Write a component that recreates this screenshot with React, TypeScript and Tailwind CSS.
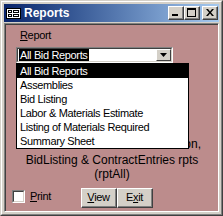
import React from "react";

const sans = { fontFamily: '"Liberation Sans", Arial, sans-serif' };

function TitleBtn({ children, className = "" }: { children: React.ReactNode; className?: string }) {
  return (
    <div className={"w-[16px] h-[14px] bg-[#D4D0C8] border-t border-l border-t-white border-l-white border-r border-b border-r-[#404040] border-b-[#404040] " + className}>
      <div className="w-full h-full border-r border-b border-r-[#808080] border-b-[#808080] flex items-center justify-center">
        {children}
      </div>
    </div>
  );
}

function Btn({ children }: { children: React.ReactNode }) {
  return (
    <div className="w-[36px] h-[20px] bg-[#D4D0C8] border-t border-l border-t-white border-l-white border-r border-b border-r-[#404040] border-b-[#404040]">
      <div className="w-full h-full border-r border-b border-r-[#808080] border-b-[#808080] flex items-center justify-center text-[11px] tracking-[-0.35px] text-black leading-none">
        {children}
      </div>
    </div>
  );
}

const items = [
  "All Bid Reports",
  "Assemblies",
  "Bid Listing",
  "Labor & Materials Estimate",
  "Listing of Materials Required",
  "Summary Sheet",
];

export default function App() {
  return (
    <div style={sans} className="w-[223px] h-[216px] bg-[#D4D0C8] border border-t-[#D4D0C8] border-l-[#D4D0C8] border-r-[#404040] border-b-[#404040]">
      <div className="w-full h-full border border-t-white border-l-white border-r-[#808080] border-b-[#808080] p-[2px] flex flex-col">
        {/* Title bar */}
        <div className="h-[18px] flex items-center bg-gradient-to-r from-[#0A246A] to-[#A6CAF0] pl-[2px] pr-[1px]">
          <svg width="15" height="11" viewBox="0 0 15 11" className="shrink-0">
            <rect x="0.5" y="0.5" width="14" height="10" fill="#fff" stroke="#000" />
            <rect x="2.5" y="2.5" width="3" height="2" fill="#fff" stroke="#000" />
            <rect x="7.5" y="2.5" width="5" height="2" fill="#fff" stroke="#000" />
            <rect x="2.5" y="6.5" width="3" height="2" fill="#fff" stroke="#000" />
            <rect x="7.5" y="6.5" width="5" height="2" fill="#fff" stroke="#000" />
          </svg>
          <span className="ml-[3px] text-white font-bold text-[12px] leading-none">Reports</span>
          <div className="ml-auto flex items-center">
            <TitleBtn>
              <svg width="8" height="7" viewBox="0 0 8 7"><rect x="0" y="5" width="6" height="2" fill="#000" /></svg>
            </TitleBtn>
            <TitleBtn>
              <svg width="9" height="9" viewBox="0 0 9 9"><rect x="0.5" y="0.5" width="8" height="8" fill="none" stroke="#000" /><rect x="0" y="0" width="9" height="2" fill="#000" /></svg>
            </TitleBtn>
            <TitleBtn className="ml-[2px]">
              <svg width="8" height="7" viewBox="0 0 8 7">
                <path d="M0 0h2l2 2.5L6 0h2L5 3.5 8 7H6L4 4.5 2 7H0l3-3.5z" fill="#000" />
              </svg>
            </TitleBtn>
          </div>
        </div>
        {/* Client */}
        <div className="mt-[1px] flex-1 border-t border-l border-t-[#808080] border-l-[#808080] border-r border-b border-r-white border-b-white">
          <div className="relative w-full h-full bg-[#BC8C8C] border-t border-l border-t-[#404040] border-l-[#404040] flex flex-col text-black">
            <div className="ml-[14px] mt-[3px] h-[14px] text-[11px] tracking-[-0.35px] leading-[14px]">
              <span className="underline">R</span>eport
            </div>
            {/* Combo */}
            <div className="ml-[10px] mt-[5px] w-[157px] h-[16px] bg-white border-t border-l border-t-[#808080] border-l-[#808080] border-r border-b border-r-white border-b-white">
              <div className="w-full h-full border-t border-l border-t-[#404040] border-l-[#404040] border-r border-b border-r-[#D4D0C8] border-b-[#D4D0C8] flex items-stretch">
                <div className="flex-1 flex items-center pl-[1px]">
                  <span className="bg-black text-white text-[11px] tracking-[-0.35px] leading-[12px] px-[1px]">All Bid Reports</span>
                </div>
                <div className="w-[15px] bg-[#D4D0C8] border-t border-l border-t-white border-l-white border-r border-b border-r-[#404040] border-b-[#404040] flex items-center justify-center">
                  <svg width="7" height="4" viewBox="0 0 7 4"><path d="M0 0h7L3.5 4z" fill="#000" /></svg>
                </div>
              </div>
            </div>
            {/* Description */}
            <div className="mt-[60px] text-[12px] leading-[14px] text-center">
              <div className="h-[14px]">Combines Bid &amp; Estimate</div>
              <div className="h-[16px] text-right pr-[17px]">Materials Estimation,</div>
              <div className="h-[14px]">BidListing &amp; ContractEntries rpts</div>
              <div className="h-[14px]">(rptAll)</div>
            </div>
            {/* Bottom row */}
            <div className="mt-[7px] pl-[6px] flex items-start">
              <div className="w-[69px] flex items-start gap-[5px]">
                <div className="mt-[2px] w-[13px] h-[13px] bg-white border-t border-l border-t-[#808080] border-l-[#808080] border-r border-b border-r-white border-b-white">
                  <div className="w-full h-full border-t border-l border-t-[#404040] border-l-[#404040] border-r border-b border-r-[#D4D0C8] border-b-[#D4D0C8]" />
                </div>
                <div className="mt-[1px] text-[11px] tracking-[-0.35px] leading-[14px]">
                  <span className="underline">P</span>rint
                </div>
              </div>
              <Btn><span><span className="underline">V</span>iew</span></Btn>
              <Btn><span>E<span className="underline">x</span>it</span></Btn>
            </div>
            {/* Dropdown list overlay */}
            <div className="absolute left-[10px] top-[38px] w-[173px] h-[86px] bg-white border border-black z-10">
              {items.map((it, i) => (
                <div
                  key={it}
                  className={
                    "h-[14px] pl-[3px] text-[11px] tracking-[-0.35px] leading-[14px] whitespace-nowrap " +
                    (i === 0 ? "bg-black text-white" : "text-black")
                  }
                >
                  {it}
                </div>
              ))}
            </div>
          </div>
        </div>
      </div>
    </div>
  );
}
